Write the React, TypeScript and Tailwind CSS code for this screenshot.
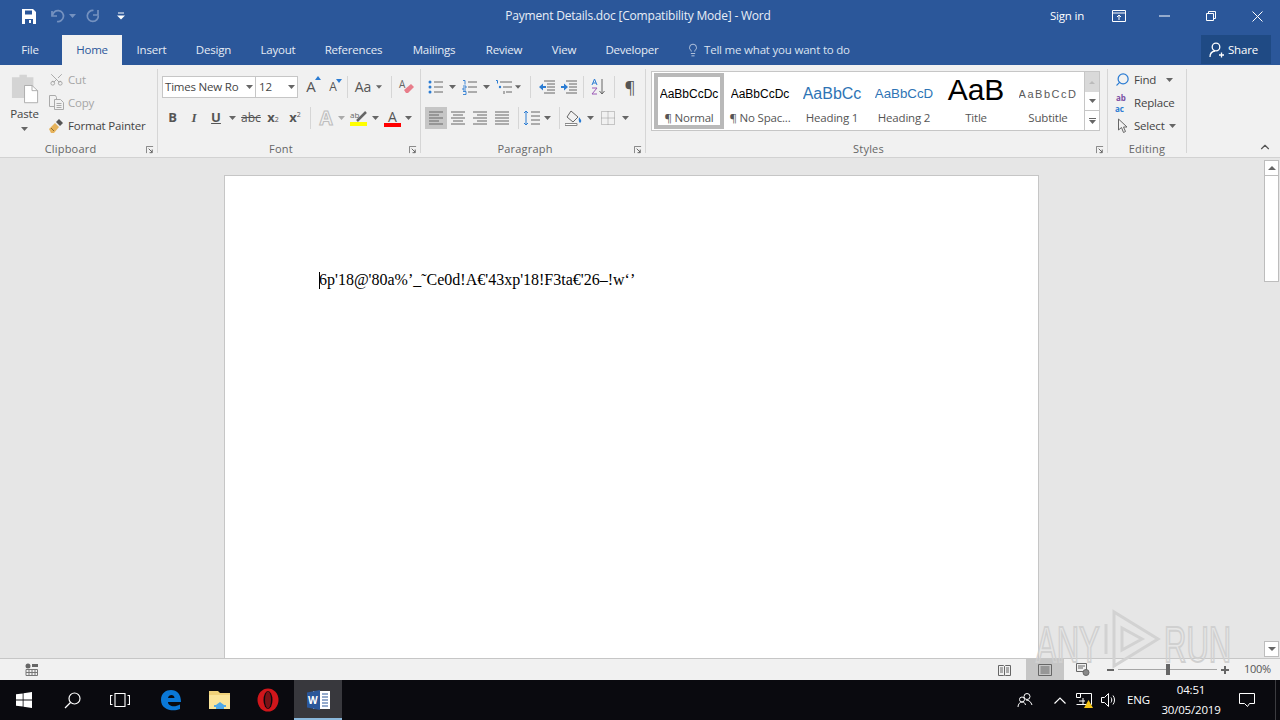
import type { ReactNode } from "react";
import { Scissors, Search, ChevronUp, Lightbulb } from "lucide-react";

const ui = "font-['Open_Sans','Noto_Sans',sans-serif]";
const small = "text-[11.5px] tracking-[-0.2px]";

function Caret({ w = 10, color = "#666" }: { w?: number; color?: string }) {
  return (
    <span className="flex items-center justify-center shrink-0" style={{ width: w }}>
      <svg width="7" height="4" viewBox="0 0 7 4"><path d="M0 0h7L3.5 4z" fill={color} /></svg>
    </span>
  );
}

function Sep({ className = "" }: { className?: string }) {
  return <span className={`block w-px h-[22px] bg-[#d6d6d6] shrink-0 ${className}`} />;
}

function Launcher() {
  return (
    <svg width="8" height="8" viewBox="0 0 9 9" className="shrink-0">
      <path d="M.5 8V.5H8" fill="none" stroke="#777" />
      <path d="M3 3l4 4M7 4v3.500H4" fill="none" stroke="#555" />
    </svg>
  );
}

function Cell({ w = 22, className = "", children }: { w?: number; className?: string; children?: ReactNode }) {
  return (
    <span className={`flex items-center justify-center shrink-0 h-[22px] ${className}`} style={{ width: w }}>
      {children}
    </span>
  );
}

function Lines({ kind }: { kind: "left" | "center" | "right" | "justify" }) {
  const rows = {
    left: ["M1 2h14", "M1 5h10", "M1 8h14", "M1 11h10", "M1 14h14"],
    center: ["M1 2h14", "M3 5h10", "M1 8h14", "M3 11h10", "M1 14h14"],
    right: ["M1 2h14", "M5 5h10", "M1 8h14", "M5 11h10", "M1 14h14"],
    justify: ["M1 2h14", "M1 5h14", "M1 8h14", "M1 11h14", "M1 14h14"],
  }[kind];
  return (
    <svg width="16" height="16" viewBox="0 0 16 16">
      {rows.map((d) => <path key={d} d={d} stroke="#666" fill="none" />)}
    </svg>
  );
}

function Bullets() {
  return (
    <svg width="16" height="16" viewBox="0 0 16 16">
      <circle cx="2" cy="3" r="1.500" fill="#2b7cd3" /><circle cx="2" cy="8" r="1.500" fill="#2b7cd3" /><circle cx="2" cy="13" r="1.500" fill="#2b7cd3" />
      <path d="M6 3h9M6 8h9M6 13h9" stroke="#666" />
    </svg>
  );
}

function Numbers() {
  return (
    <svg width="16" height="16" viewBox="0 0 16 16">
      <path d="M1 1.500h2v4M1 7h3v2H1v2h3M1 12.500h3v3H1" stroke="#2b7cd3" fill="none" strokeWidth=".9" />
      <path d="M6 3h9M6 8h9M6 13h9" stroke="#666" />
    </svg>
  );
}

function Multi() {
  return (
    <svg width="18" height="16" viewBox="0 0 18 16">
      <path d="M1 1.500h1.500v3" stroke="#2b7cd3" fill="none" />
      <path d="M5 3h12M8 8h9M11 13h6" stroke="#666" />
      <circle cx="5" cy="8" r="1.200" fill="#2b7cd3" />
      <path d="M9 12v3" stroke="#666" />
    </svg>
  );
}

function Indent({ dir }: { dir: "in" | "out" }) {
  return (
    <svg width="17" height="14" viewBox="0 0 17 14">
      <path d="M6 1h11M9 4h8M9 7h8M9 10h8M6 13h11" stroke="#666" />
      {dir === "out"
        ? <path d="M1 7l4-3.500v2.500h3v2H5v2.500z" fill="#2b7cd3" />
        : <path d="M8 7L4 3.500v2.500H1v2h3v2.500z" fill="#2b7cd3" />}
    </svg>
  );
}

function WinGlyph() {
  return (
    <svg width="16" height="16" viewBox="0 0 16 16">
      <path d="M0 2.300l6.700-.9v6.200H0zM7.500 1.300L16 0v7.600H7.500zM0 8.400h6.700v6.200L0 13.700zM7.500 8.400H16V16l-8.500-1.200z" fill="#fff" />
    </svg>
  );
}

function TitleBar() {
  return (
    <div className="flex h-8 items-center text-white">
      <div className="flex w-[236px] items-center shrink-0">
        <span className="w-[22px]" />
        <svg width="14" height="15" viewBox="0 0 14 15">
          <path d="M0 0h11l3 3v12H0z" fill="#fff" />
          <path d="M3 1.500h7v4H3zM3 10h8v5H3z" fill="#2b579a" />
          <path d="M7 11h2v3H7z" fill="#fff" />
        </svg>
        <span className="w-[15px]" />
        <svg width="14" height="14" viewBox="0 0 14 14" fill="none" stroke="#7592c0" strokeWidth="1.700">
          <path d="M1 2v5h5" /><path d="M1.500 6.500A5.500 5.500 0 1 1 6 12.500" />
        </svg>
        <span className="ml-[3px]"><Caret w={8} color="#7592c0" /></span>
        <span className="w-[10px]" />
        <svg width="14" height="14" viewBox="0 0 14 14" fill="none" stroke="#7592c0" strokeWidth="1.700">
          <path d="M12 1v5H7" /><path d="M7.500 1.500a5.500 5.500 0 1 0 4.800 5" />
        </svg>
        <span className="w-[17px]" />
        <svg width="8" height="8" viewBox="0 0 8 8">
          <path d="M1 1h6" stroke="#fff" /><path d="M0 3.500h8L4 7.500z" fill="#fff" />
        </svg>
      </div>
      <div className="flex-1 min-w-0 text-center text-[12px] tracking-[-0.2px] text-[#e8eef7]">Payment Details.doc [Compatibility Mode] - Word</div>
      <div className="flex w-[240px] items-center shrink-0">
        <span className={`ml-[10px] w-[36px] whitespace-nowrap ${small}`}>Sign in</span>
        <span className="ml-[26px]">
          <svg width="14" height="12" viewBox="0 0 14 12" fill="none" stroke="#fff">
            <path d="M.5.500h13v11H.5zM.5 3h13" /><path d="M7 10V5M5 7l2-2 2 2" />
          </svg>
        </span>
        <span className="ml-[33px]"><svg width="11" height="2" viewBox="0 0 11 2"><path d="M0 1h11" stroke="#fff" /></svg></span>
        <span className="ml-[36px]">
          <svg width="10" height="10" viewBox="0 0 10 10" fill="none" stroke="#fff"><path d="M.5 2.500h7v7h-7zM2.500 2.500v-2h7v7h-2" /></svg>
        </span>
        <span className="ml-[36px]">
          <svg width="11" height="11" viewBox="0 0 11 11" stroke="#fff"><path d="M.5.500l10 10M10.500.500l-10 10" /></svg>
        </span>
      </div>
    </div>
  );
}

const tabs: [string, number][] = [
  ["Insert", 59], ["Design", 65], ["Layout", 64], ["References", 87],
  ["Mailings", 74], ["Review", 66], ["View", 54], ["Developer", 82],
];

function TabRow() {
  return (
    <div className={`flex h-[33px] items-end text-[#e6ecf5] ${small}`}>
      <span className="flex h-[30px] w-[60px] items-center justify-center pb-[1px]">File</span>
      <span className="ml-[2px] flex h-[30px] w-[60px] items-center justify-center bg-[#f1f1f1] pb-[1px] text-[#2b579a]">Home</span>
      {tabs.map(([name, w]) => (
        <span key={name} className="flex h-[30px] items-center justify-center pb-[1px]" style={{ width: w }}>{name}</span>
      ))}
      <span className="ml-[13px] flex h-[30px] items-center gap-[4px] w-[180px] whitespace-nowrap pb-[1px] text-[#dbe3f0]">
        <Lightbulb size={14} strokeWidth={1.300} />
        Tell me what you want to do
      </span>
      <span className="ml-auto mr-[9px] flex h-[29px] w-[70px] items-center gap-[3px] self-start mt-[3px] bg-[#1f4a84] pl-[8px] text-white">
        <svg width="16" height="16" viewBox="0 0 16 16" fill="none" stroke="#fff" strokeWidth="1.300">
          <circle cx="7" cy="5" r="3.800" /><path d="M1 15c0-3 2-5.500 5-6M10 13h5M12.500 10.500v5" />
        </svg>
        Share
      </span>
    </div>
  );
}

function Group({ w, label, launcher, children }: { w: number; label: string; launcher?: boolean; children: ReactNode }) {
  return (
    <div className="relative mt-[4px] flex h-[84px] shrink-0 flex-col border-r border-[#d6d6d6]" style={{ width: w }}>
      <div className="h-[73px] shrink-0">{children}</div>
      <div className={`flex h-[14px] shrink-0 items-center justify-center text-[11px] tracking-[0.2px] text-[#666] ${launcher ? "pr-[16px]" : ""}`}>
        {label}
      </div>
      {launcher && <span className="absolute -bottom-[1px] right-[3px] flex"><Launcher /></span>}
    </div>
  );
}

function Clipboard() {
  return (
    <div className="flex">
      <div className="flex w-[49px] flex-col items-center pt-[4px]">
        <svg width="28" height="31" viewBox="0 0 30 36" preserveAspectRatio="none">
          <path d="M1 5h8V2h8v3h7v24H1z" fill="#d4d4d4" />
          <path d="M14.500 14.500h8l6 6v14h-14z" fill="#fff" stroke="#a8a8a8" />
          <path d="M22.500 14.500v6h6" fill="none" stroke="#a8a8a8" />
        </svg>
        <span className={`mt-[1px] leading-[18px] text-[#444] ${small}`}>Paste</span>
        <span className="mt-[4px]"><Caret /></span>
      </div>
      <div className={`-mt-[1px] flex flex-col leading-[23px] whitespace-nowrap ${small}`}>
        <span className="flex h-[23px] items-center gap-[4px] text-[#a6a6a6]">
          <Scissors size={15} strokeWidth={1.400} color="#a0a0a0" className="-rotate-90" />Cut
        </span>
        <span className="flex h-[23px] items-center gap-[4px] text-[#a6a6a6]">
          <svg width="15" height="15" viewBox="0 0 15 15" fill="none" stroke="#aaa">
            <path d="M.5.500h6l1 2v9h-7z" /><path d="M5.500 4.500h6l3 3v7h-9z" fill="#f1f1f1" /><path d="M7.500 8.500h5M7.500 10.500h5M7.500 12.500h5" />
          </svg>
          Copy
        </span>
        <span className="flex h-[23px] items-center gap-[4px] text-[#444]">
          <svg width="15" height="15" viewBox="0 0 15 15">
            <path d="M0 11l6-6 4 4-5 6H2z" fill="#e6b35c" />
            <path d="M7 4l3-3 4 4-3 3z" fill="#555" />
            <path d="M2 10l3 3" stroke="#8a6a2e" />
          </svg>
          Format Painter
        </span>
      </div>
    </div>
  );
}

function Font() {
  return (
    <div className="flex flex-col pl-[4px]">
      <div className="mt-[6px] flex h-[23px] items-center">
        <span className={`flex h-[22px] w-[94px] items-center justify-between border border-[#c6c6c6] bg-white pl-[2px] pr-[1px] text-[#444] whitespace-nowrap ${small}`}>
          Times New Ro<Caret w={9} />
        </span>
        <span className={`-ml-px flex h-[22px] w-[43px] items-center justify-between border border-[#c6c6c6] bg-white pl-[3px] pr-[1px] text-[#444] ${small}`}>
          12<Caret w={9} />
        </span>
        <Cell w={22} className="ml-[2px]">
          <span className="relative text-[15px] text-[#555]">A<span className="absolute -right-[5px] top-[1px] block h-0 w-0 border-x-[3px] border-b-[4px] border-x-transparent border-b-[#2b7cd3]" /></span>
        </Cell>
        <Cell w={22}>
          <span className="relative text-[12px] text-[#555]">A<span className="absolute -right-[5px] top-[1px] block h-0 w-0 border-x-[3px] border-t-[4px] border-x-transparent border-t-[#2b7cd3]" /></span>
        </Cell>
        <Sep className="ml-[3px]" />
        <Cell w={26} className="ml-[2px] text-[14px] text-[#555]">Aa</Cell>
        <Caret w={6} />
        <Sep className="ml-[9px]" />
        <Cell w={22} className="ml-[4px]">
          <svg width="16" height="16" viewBox="0 0 16 16" className="overflow-visible">
            <path d="M9 14l6-6-3-3-7 6 2 3z" fill="#e87d8a" />
            <text x="0" y="9" fontSize="10" fill="#666" fontFamily="Open Sans">A</text>
          </svg>
        </Cell>
      </div>
      <div className="mt-[9px] flex h-[22px] items-center text-[#555]">
        <Cell w={21} className="text-[13px] font-bold">B</Cell>
        <Cell w={22} className="text-[13px] italic font-bold font-['Liberation_Serif']">I</Cell>
        <Cell w={22} className="text-[13px] font-bold underline">U</Cell>
        <Caret w={11} />
        <Cell w={22} className="ml-[2px] text-[12px] line-through">abc</Cell>
        <Cell w={22} className="text-[13px] font-bold">x<span className="text-[7px] font-normal mt-[5px]">2</span></Cell>
        <Cell w={22} className="text-[13px] font-bold">x<span className="text-[7px] font-normal -mt-[6px]">2</span></Cell>
        <Sep className="ml-[4px]" />
        <Cell w={22} className="ml-[4px] text-[19px] font-bold text-transparent [-webkit-text-stroke:1px_#bdbdbd]">A</Cell>
        <Caret w={8} color="#aaa" />
        <Cell w={22} className="ml-[3px]">
          <svg width="18" height="16" viewBox="0 0 18 16" className="overflow-visible">
            <path d="M0 12h17v4H0z" fill="#ffff00" />
            <path d="M7 11l9-9" stroke="#666" strokeWidth="2.500" />
            <text x="0" y="8" fontSize="8" fill="#666" fontFamily="Open Sans">ab</text>
          </svg>
        </Cell>
        <Caret w={10} />
        <Cell w={22} className="ml-[1px]">
          <svg width="17" height="17" viewBox="0 0 17 17" className="overflow-visible">
            <path d="M0 13h17v4H0z" fill="#ff0000" />
            <text x="8.500" y="12" textAnchor="middle" fontSize="14" fill="#555" fontFamily="Open Sans">A</text>
          </svg>
        </Cell>
        <Caret w={10} />
      </div>
    </div>
  );
}

function Paragraph() {
  return (
    <div className="flex flex-col">
      <div className="mt-[6px] flex h-[23px] items-center">
        <Cell w={22} className="ml-[4px]"><Bullets /></Cell>
        <Caret w={10} />
        <Cell w={22} className="ml-[2px]"><Numbers /></Cell>
        <Caret w={10} />
        <Cell w={22} className="ml-[2px]"><Multi /></Cell>
        <Caret w={6} />
        <Sep className="ml-[9px]" />
        <Cell w={22} className="ml-[4px]"><Indent dir="out" /></Cell>
        <Cell w={22}><Indent dir="in" /></Cell>
        <Sep className="ml-[4px]" />
        <Cell w={22} className="ml-[4px]">
          <svg width="16" height="18" viewBox="0 0 16 18" fill="none">
            <path d="M3.500 1L1 7M3.500 1L6 7M2 5h3" stroke="#2b7cd3" />
            <path d="M1 10h5l-5 6h5" stroke="#9b59b6" />
            <path d="M11 1v15M8.500 13l2.500 3 2.500-3" stroke="#666" />
          </svg>
        </Cell>
        <Sep className="ml-[4px]" />
        <Cell w={22} className="ml-[4px] text-[17px] text-[#555]">¶</Cell>
      </div>
      <div className="mt-[9px] flex h-[22px] items-center">
        <Cell w={22} className="ml-[4px] bg-[#c6c6c6]"><Lines kind="left" /></Cell>
        <Cell w={22}><Lines kind="center" /></Cell>
        <Cell w={22}><Lines kind="right" /></Cell>
        <Cell w={22}><Lines kind="justify" /></Cell>
        <Sep className="ml-[5px]" />
        <Cell w={22} className="ml-[2px]">
          <svg width="18" height="16" viewBox="0 0 18 16" fill="none">
            <path d="M3 1v14M1 3l2-2 2 2M1 13l2 2 2-2" stroke="#2b7cd3" />
            <path d="M8 2h9M8 6h9M8 10h9M8 14h9" stroke="#666" />
          </svg>
        </Cell>
        <Caret w={8} />
        <Sep className="ml-[8px]" />
        <Cell w={22} className="ml-[3px]">
          <svg width="18" height="16" viewBox="0 0 18 16" fill="none">
            <path d="M6 1l7 6-5 5-6-5z" stroke="#666" />
            <path d="M14 7c1 2 3 3 2 5s-3 0-2-5z" fill="#2b7cd3" />
            <path d="M0 13.500h12v2H0z" fill="#fff" stroke="#888" />
          </svg>
        </Cell>
        <Caret w={10} />
        <Cell w={22} className="ml-[2px]">
          <svg width="14" height="14" viewBox="0 0 14 14" fill="none" stroke="#999" strokeDasharray="1 1">
            <path d="M.5.500h13v13H.5zM7 .5v13M.5 7h13" />
          </svg>
        </Cell>
        <Caret w={12} />
      </div>
    </div>
  );
}

function StyleItem({ name, selected, preview }: { name: string; selected?: boolean; preview: ReactNode }) {
  return (
    <div className={`flex h-[56px] shrink-0 flex-col items-center overflow-hidden ${selected ? "w-[70px] border-[4px] border-[#b9b9b9]" : "w-[72px] pt-[4px]"}`}>
      <div className="flex h-[34px] w-[59px] shrink-0 items-center justify-center overflow-hidden whitespace-nowrap">{preview}</div>
      <div className={`flex h-[14px] shrink-0 items-center whitespace-nowrap text-[#555] ${small}`}>{name}</div>
    </div>
  );
}

function Styles() {
  const face = "font-['Liberation_Sans',sans-serif]";
  return (
    <div className="flex pl-[5px] pt-[2px]">
      <div className="flex h-[60px] w-[449px] items-start border border-[#c6c6c6] bg-white pl-[2px]">
        <div className="flex h-[58px] w-[430px] pt-[1px]">
          <StyleItem selected name="¶ Normal" preview={<span className={`${face} text-[12px] text-black`}>AaBbCcDc</span>} />
          <StyleItem name="¶ No Spac..." preview={<span className={`${face} text-[12px] text-black`}>AaBbCcDc</span>} />
          <StyleItem name="Heading 1" preview={<span className={`${face} text-[16px] text-[#2e74b5]`}>AaBbCc</span>} />
          <StyleItem name="Heading 2" preview={<span className={`${face} text-[13.300px] text-[#2e74b5]`}>AaBbCcD</span>} />
          <StyleItem name="Title" preview={<span className={`${face} -translate-y-[4px] text-[30px] leading-[26px] text-black`}>AaB</span>} />
          <StyleItem name="Subtitle" preview={<span className={`${face} text-[11px] tracking-[1.500px] text-[#5a5a5a]`}>AaBbCcD</span>} />
        </div>
        <div className="ml-auto flex h-[58px] w-[15px] flex-col border-l border-[#c6c6c6]">
          <span className="flex h-[20px] items-center justify-center bg-[#d9d9d9]"><span className="block h-0 w-0 border-x-[3px] border-b-[3px] border-x-transparent border-b-[#bbb]" /></span>
          <span className="flex h-[19px] items-center justify-center border-b border-[#c6c6c6]"><Caret w={9} /></span>
          <span className="flex flex-1 flex-col items-center justify-center gap-[1px]">
            <span className="block h-px w-[7px] bg-[#666]" />
            <Caret w={9} />
          </span>
        </div>
      </div>
    </div>
  );
}

function Editing() {
  return (
    <div className={`-mt-[1px] flex flex-col pl-[7px] text-[#444] whitespace-nowrap ${small}`}>
      <span className="flex h-[23px] items-center gap-[4px]">
        <Search size={15} strokeWidth={2} color="#2b7cd3" className="-scale-x-100" />Find<span className="ml-[5px]"><Caret w={9} /></span>
      </span>
      <span className="flex h-[23px] items-center gap-[3px]">
        <span className="flex w-[16px] flex-col text-[8px] font-bold leading-[11px] tracking-normal text-[#2b7cd3]">
          <span className="pl-[1px] text-[#7b4fa3]">ab</span>
          <span>ac</span>
        </span>
        Replace
      </span>
      <span className="flex h-[23px] items-center gap-[4px]">
        <svg width="15" height="16" viewBox="0 0 15 16" fill="none" stroke="#666">
          <path d="M3.500 1v11l3-2.500 2 5 2-1-2-4.500H12z" />
        </svg>
        Select<Caret w={7} />
      </span>
    </div>
  );
}

function Ribbon() {
  return (
    <div className={`flex h-[93px] items-start border-b border-[#d2d2d2] bg-[#f1f1f1] ${ui}`}>
      <Group w={158} label="Clipboard" launcher><Clipboard /></Group>
      <Group w={263} label="Font" launcher><Font /></Group>
      <Group w={225} label="Paragraph" launcher><Paragraph /></Group>
      <Group w={462} label="Styles" launcher><Styles /></Group>
      <Group w={79} label="Editing"><Editing /></Group>
      <div className="flex h-[90px] flex-1 items-end justify-end pb-[1px] pr-[8px]">
        <ChevronUp size={14} strokeWidth={2} color="#555" />
      </div>
    </div>
  );
}

function ScrollBtn({ up }: { up?: boolean }) {
  return (
    <span className="flex h-[16px] w-[15px] items-center justify-center border border-[#bdbdbd] bg-white">
      <span className={`block h-0 w-0 border-x-[4px] border-x-transparent ${up ? "border-b-[4px] border-b-[#666]" : "border-t-[4px] border-t-[#666]"}`} />
    </span>
  );
}

function Document() {
  return (
    <div className="flex h-[500px] bg-[#e6e6e6]">
      <div className="flex flex-1 justify-center overflow-hidden pr-[1px] pt-[17px]">
        <div className="h-[600px] w-[815px] border border-[#c6c6c6] bg-white pl-[94px] pt-[95px]">
          <p className="flex items-center whitespace-nowrap font-['Liberation_Serif',serif] text-[16px] leading-[18px] text-black">
            <span className="-mr-px block h-[17px] w-px bg-black" />
            6p'18@'80a%’_˜Ce0d!A€'43xp'18!F3ta€'26–!w‘’
          </p>
        </div>
      </div>
      <div className="flex w-[16px] flex-col bg-[#e6e6e6] pt-[2px]">
        <ScrollBtn up />
        <span className="block h-[106px] w-[15px] border border-t-0 border-[#bdbdbd] bg-white" />
        <span className="mt-auto mb-[1px]"><ScrollBtn /></span>
      </div>
    </div>
  );
}

function Watermark() {
  return (
    <div className="pointer-events-none absolute left-[1036px] top-[608px] flex h-[62px] w-[200px] items-end font-['Liberation_Sans',sans-serif] text-[50px] leading-[50px] text-transparent [-webkit-text-stroke:2px_#d0d0d0]">
      <span className="block w-[66px] origin-left scale-x-[0.62] whitespace-nowrap">ANY</span>
      <svg width="62" height="62" viewBox="0 0 62 62" fill="none" stroke="#d2d2d2" strokeWidth="3" className="shrink-0">
        <path d="M4 16v30M12 4v54l44-27z" />
        <path d="M20 20v22l20-11z" />
      </svg>
      <span className="block w-[70px] origin-left scale-x-[0.62] whitespace-nowrap">RUN</span>
    </div>
  );
}

function StatusBar() {
  return (
    <div className={`flex h-[22px] items-center border-t border-[#c6c6c6] bg-[#f1f1f1] text-[#555] ${ui}`}>
      <span className="ml-[25px]">
        <svg width="13" height="13" viewBox="0 0 13 13">
          <circle cx="3" cy="3" r="2.500" fill="#666" /><path d="M7 1h6v3H7z" fill="#666" />
          <path d="M1 6.500h11.500v6H1zM1 9.500h11.500M4 6.500v6M7 6.500v6M10 6.500v6" fill="none" stroke="#777" />
        </svg>
      </span>
      <div className="ml-auto flex h-full items-center">
        <svg width="13" height="12" viewBox="0 0 13 12" fill="none" stroke="#666"><path d="M.5 1.500h5l1 1 1-1h5v10h-5l-1-.5-1 .5h-5zM6.500 2.500v9M2 4h3M2 6h3M2 8h3M8 4h3M8 6h3M8 8h3" /></svg>
        <span className="ml-[15px] flex h-full w-[38px] items-center justify-center bg-[#c6c6c6]">
          <svg width="14" height="12" viewBox="0 0 14 12" fill="none" stroke="#666"><path d="M.5.500h13v11H.5zM2.500 3h9M2.500 5h9M2.500 7h9M2.500 9h9" /></svg>
        </span>
        <span className="ml-[12px]">
          <svg width="14" height="13" viewBox="0 0 14 13" fill="none" stroke="#666"><path d="M.5.500h10v8H.5zM2 3h7M2 5h5" /><circle cx="10" cy="9.500" r="3" fill="#888" /></svg>
        </span>
        <span className="ml-[17px] block h-[2px] w-[7px] bg-[#666]" />
        <div className="ml-[4px] flex h-[11px] w-[99px] items-center justify-center">
          <span className="block h-px flex-1 bg-[#a6a6a6]" />
          <span className="block h-[11px] w-[4px] bg-[#666]" />
          <span className="block h-px flex-1 bg-[#a6a6a6]" />
        </div>
        <span className="relative ml-[4px] block h-[8px] w-[8px]">
          <span className="absolute left-0 top-[3px] block h-[2px] w-[8px] bg-[#666]" />
          <span className="absolute left-[3px] top-0 block h-[8px] w-[2px] bg-[#666]" />
        </span>
        <span className="ml-[15px] mr-[9px] w-[27px] whitespace-nowrap text-[11px] tracking-[-0.3px]">100%</span>
      </div>
    </div>
  );
}

function Taskbar() {
  return (
    <div className={`flex h-[40px] items-center bg-[#0a0a0f] text-white ${ui}`}>
      <span className="flex h-full w-[48px] items-center justify-center"><WinGlyph /></span>
      <span className="flex h-full w-[48px] items-center justify-center">
        <svg width="17" height="17" viewBox="0 0 17 17" fill="none" stroke="#fff" strokeWidth="1.200"><circle cx="10.500" cy="6.500" r="5.500" /><path d="M6.500 10.500L1 16" /></svg>
      </span>
      <span className="flex h-full w-[48px] items-center justify-center">
        <svg width="20" height="14" viewBox="0 0 20 14" fill="none" stroke="#fff" strokeWidth="1.100"><path d="M5 .5h10v13H5zM2.500 2.500H.5v9h2M17.500 2.500h2v9h-2" /></svg>
      </span>
      <span className="ml-[3px] flex h-full w-[48px] items-center justify-center">
        <svg width="22" height="22" viewBox="0 0 22 22">
          <path d="M1 11C1 4 6 1 11 1c6 0 10 4 10 12H8c0 4 6 6 12 2.500v4.500C13 23 1 21 1 11zM8 9h6.500c0-4-6-4-6.500 0z" fill="#0a78d7" />
        </svg>
      </span>
      <span className="ml-[1px] flex h-full w-[48px] items-center justify-center">
        <svg width="22" height="18" viewBox="0 0 22 18">
          <path d="M0 0h9l2 2h10v16H0z" fill="#f0d27a" />
          <path d="M0 4h21v14H0z" fill="#fbe59a" />
          <path d="M7 18v-4l4-3 4 3v4z" fill="#4fa9e8" />
          <path d="M5 14h12v2H5z" fill="#4fa9e8" />
        </svg>
      </span>
      <span className="flex h-full w-[48px] items-center justify-center">
        <svg width="22" height="24" viewBox="0 0 22 24">
          <ellipse cx="11" cy="12" rx="10.500" ry="11.500" fill="#d0161b" />
          <ellipse cx="11" cy="12" rx="4.500" ry="9" fill="#0a0a0f" />
          <ellipse cx="11" cy="12" rx="3" ry="8.500" fill="#7a1216" />
        </svg>
      </span>
      <span className="relative ml-[2px] flex h-full w-[48px] items-center justify-center bg-[#38383d]">
        <svg width="23" height="20" viewBox="0 0 23 20">
          <path d="M6 1h17v18H6z" fill="#fff" />
          <path d="M15 4h6M15 7h6M15 10h6M15 13h6M15 16h6" stroke="#2b579a" />
          <path d="M0 2.500L13 0v20L0 17.500z" fill="#2b579a" />
        </svg>
        <span className="absolute left-[14px] top-[13px] text-[10px] font-bold leading-[14px]">W</span>
        <span className="absolute inset-x-0 bottom-0 block h-[2px] bg-[#8ab8dc]" />
      </span>
      <div className="ml-auto flex h-full items-center">
        <svg width="16" height="16" viewBox="0 0 16 16" fill="none" stroke="#fff"><circle cx="10" cy="4.500" r="3" /><circle cx="5" cy="7.500" r="2.500" /><path d="M1 15c0-3 2-5 4-5s3 1 3.500 3M9 8c3 0 5 2 6 5" /></svg>
        <span className="ml-[21px]"><svg width="12" height="7" viewBox="0 0 12 7" fill="none" stroke="#fff" strokeWidth="1.200"><path d="M.5 6.500L6 1l5.500 5.500" /></svg></span>
        <span className="relative ml-[10px]">
          <svg width="16" height="14" viewBox="0 0 16 14" fill="none" stroke="#fff"><path d="M.5.500h15v11h-15M.5.500v4h4v-4M7 5v6M3 8h6" /></svg>
          <svg width="9" height="8" viewBox="0 0 9 8" className="absolute -right-[1px] -bottom-[1px]"><path d="M4.500 0L9 8H0z" fill="#f5c518" /></svg>
        </span>
        <span className="ml-[9px]">
          <svg width="16" height="14" viewBox="0 0 16 14" fill="none" stroke="#fff"><path d="M.5 4.500h3l4-4v13l-4-4h-3zM10 4.500c1 1.500 1 3.500 0 5M12 2.500c2 2.500 2 6.500 0 9" /></svg>
        </span>
        <span className={`ml-[10px] w-[23px] whitespace-nowrap ${small}`}>ENG</span>
        <div className={`ml-[8px] flex w-[66px] flex-col items-center leading-[20px] ${small}`}>
          <span>04:51</span>
          <span className="whitespace-nowrap">30/05/2019</span>
        </div>
        <span className="ml-[15px]">
          <svg width="16" height="15" viewBox="0 0 16 15" fill="none" stroke="#fff"><path d="M.5.500h15v10h-5l-2 3-3-3h-5z" /></svg>
        </span>
        <span className="ml-[20px] mr-[4px] block h-full w-px bg-[#3c3c40]" />
      </div>
    </div>
  );
}

export default function App() {
  return (
    <div className={`relative h-[720px] w-[1280px] overflow-hidden bg-[#e6e6e6] ${ui}`}>
      <div className="bg-[#2b579a]">
        <TitleBar />
        <TabRow />
      </div>
      <Ribbon />
      <Document />
      <StatusBar />
      <Taskbar />
      <Watermark />
    </div>
  );
}
